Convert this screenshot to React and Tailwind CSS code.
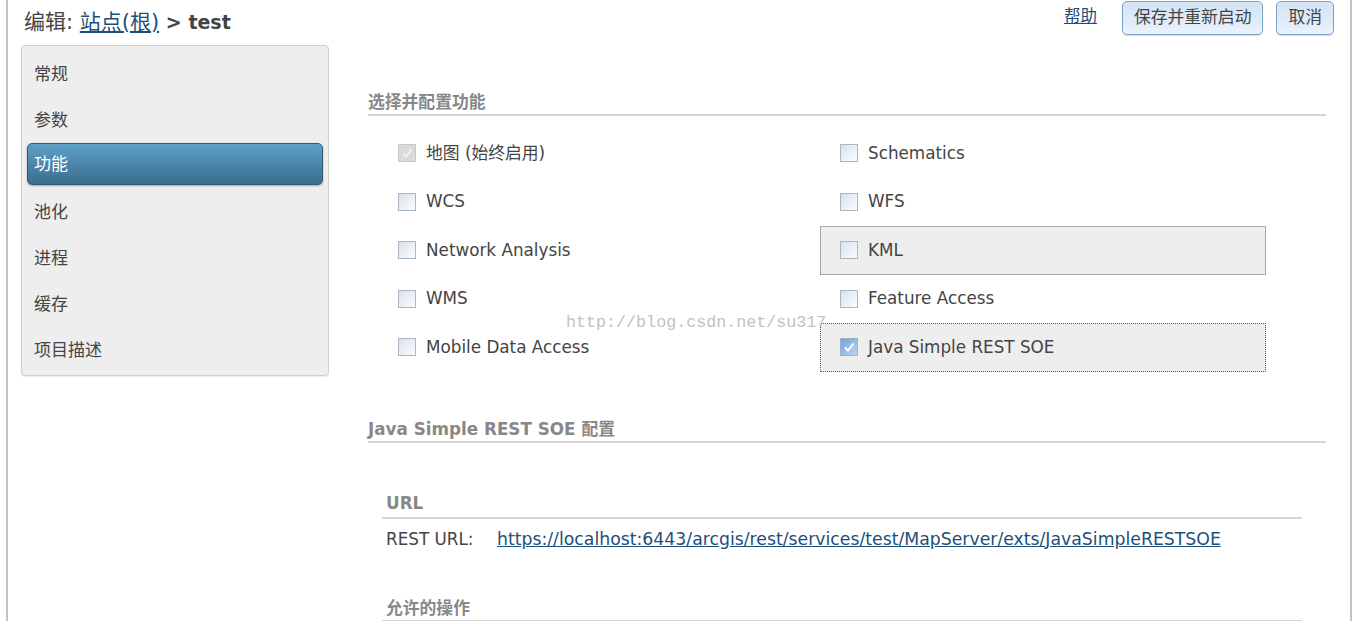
import React from 'react';

const FONT = { fontFamily: '"DejaVu Sans", "Noto Sans CJK SC", sans-serif' };

const navItems = ['常规', '参数', '功能', '池化', '进程', '缓存', '项目描述'];

const features = [
  { left: { label: '地图 (始终启用)', state: 'locked' }, right: { label: 'Schematics' } },
  { left: { label: 'WCS' }, right: { label: 'WFS' } },
  { left: { label: 'Network Analysis' }, right: { label: 'KML', box: 'hover' } },
  { left: { label: 'WMS' }, right: { label: 'Feature Access' } },
  { left: { label: 'Mobile Data Access' }, right: { label: 'Java Simple REST SOE', state: 'checked', box: 'focus' } },
];

const Checkbox = ({ state }) => {
  if (state === 'locked') {
    return (
      <span className="w-[18px] h-[18px] shrink-0 border border-[#c8c8c8] bg-[#dadada] flex items-center justify-center">
        <svg width="12" height="12" viewBox="0 0 12 12">
          <path d="M2 6.5 L5 9.5 L10.5 2.5" fill="none" stroke="#f2f2f2" strokeWidth="2" />
        </svg>
      </span>
    );
  }
  if (state === 'checked') {
    return (
      <span className="w-[18px] h-[18px] shrink-0 border border-[#9db0c4] bg-gradient-to-br from-[#6fa3d8] to-[#bcd6ef] flex items-center justify-center">
        <svg width="12" height="12" viewBox="0 0 12 12">
          <path d="M2 6.5 L5 9.5 L10.5 2.5" fill="none" stroke="#ffffff" strokeWidth="2" />
        </svg>
      </span>
    );
  }
  return <span className="w-[18px] h-[18px] shrink-0 border border-[#a9b6c4] bg-gradient-to-br from-[#d6e1ec] to-[#fdfdfe]" />;
};

const FeatureCell = ({ item, right }) => {
  let box = 'border border-transparent';
  if (item.box === 'hover') box = 'border border-[#a8a8a8] bg-[#eeeeee]';
  if (item.box === 'focus') box = 'border border-dotted border-[#555] bg-[#eeeeee]';
  return (
    <div className={`h-[48.5px] flex items-center gap-[10px] ${right ? 'pl-[19px]' : 'pl-[29px]'} ${box}`}>
      <Checkbox state={item.state} />
      <span className="text-[16.8px] text-[#444]">{item.label}</span>
    </div>
  );
};

const SectionTitle = ({ children, className = '' }) => (
  <div className={`border-b-2 border-[#d6d6d6] pb-[1px] text-[16.8px] font-bold text-[#888] leading-[22px] ${className}`}>
    {children}
  </div>
);

export default function App() {
  return (
    <div className="bg-white h-[621px] overflow-hidden" style={FONT}>
      <div className="ml-[6px] w-[1346px] h-full border-x-2 border-[#c4c4c4] relative">

        {/* Header */}
        <div className="h-[44px] flex items-start justify-between pl-[16px] pr-[16px]">
          <h1 className="mt-[8px] text-[21px] leading-[28px] text-[#444]">
            编辑: <a className="underline text-[#1d4f7c]">站点(根)</a>{' '}
            <span className="font-bold text-[19px]">&gt; test</span>
          </h1>
          <div className="flex items-start">
            <a className="mt-[5px] text-[16.5px] text-[#1d4f7c] underline mr-[25px]">帮助</a>
            <button className="h-[34px] mt-[1px] px-[11px] rounded-[5px] border border-[#7ea3c9] bg-gradient-to-b from-[#d3e3f5] to-[#eaf2fc] text-[16.8px] text-[#444] shadow-[0_1px_1px_rgba(0,0,0,0.15)]">
              保存并重新启动
            </button>
            <button className="h-[34px] mt-[1px] ml-[13px] px-[11px] rounded-[5px] border border-[#7ea3c9] bg-gradient-to-b from-[#d3e3f5] to-[#eaf2fc] text-[16.8px] text-[#444] shadow-[0_1px_1px_rgba(0,0,0,0.15)]">
              取消
            </button>
          </div>
        </div>

        <div className="flex pl-[13px]">
          {/* Sidebar */}
          <div className="w-[308px] h-[331px] shrink-0 mt-[1px] bg-[#eeeeee] border border-[#cfcfcf] rounded-[4px] shadow-[0_1px_1px_rgba(0,0,0,0.08)] pt-[5px] px-[5px]">
            {navItems.map((item) => (
              <div
                key={item}
                className={
                  item === '功能'
                    ? 'h-[42px] mb-[4px] flex items-center pl-[6px] pt-[2px] rounded-[5px] border border-[#2f5a78] bg-gradient-to-b from-[#5fa1c8] to-[#3b6d8f] text-white text-[17px] shadow-[0_1px_2px_rgba(0,0,0,0.3)]'
                    : 'h-[46px] flex items-center pl-[7px] pt-[2px] text-[17px] text-[#444]'
                }
              >
                {item}
              </div>
            ))}
          </div>

          {/* Main */}
          <div className="ml-[39px] w-[958px]">
            <SectionTitle className="mt-[47px]">选择并配置功能</SectionTitle>

            <div className="mt-[13px] grid grid-cols-[452px_446px] relative">
              {features.map((row, i) => (
                <React.Fragment key={i}>
                  <FeatureCell item={row.left} />
                  <FeatureCell item={row.right} right />
                </React.Fragment>
              ))}
              <span
                className="absolute left-[198px] top-[181px] text-[16.7px] text-[#c2c2c2] pointer-events-none"
                style={{ fontFamily: '"Liberation Mono", "DejaVu Sans Mono", monospace' }}
              >
                http://blog.csdn.net/su317
              </span>
            </div>

            <SectionTitle className="mt-[46px]">Java Simple REST SOE 配置</SectionTitle>

            <div className="ml-[14px] mr-[24px]">
              <div className="mt-[49px] border-b-2 border-[#d6d6d6] pb-[3px] pl-[4px] text-[16.8px] font-bold text-[#888] leading-[22px]">
                URL
              </div>
              <div className="mt-[9px] pl-[4px] flex text-[16.8px] text-[#444] leading-[22px]">
                <span className="w-[111px]">REST URL:</span>
                <a className="underline text-[#1d4f7c] text-[17.3px]">
                  https://localhost:6443/arcgis/rest/services/test/MapServer/exts/JavaSimpleRESTSOE
                </a>
              </div>
              <div className="mt-[47px] border-b-2 border-[#d6d6d6] pb-[1px] pl-[4px] text-[16.8px] font-bold text-[#888] leading-[22px]">
                允许的操作
              </div>
            </div>
          </div>
        </div>
      </div>
    </div>
  );
}
